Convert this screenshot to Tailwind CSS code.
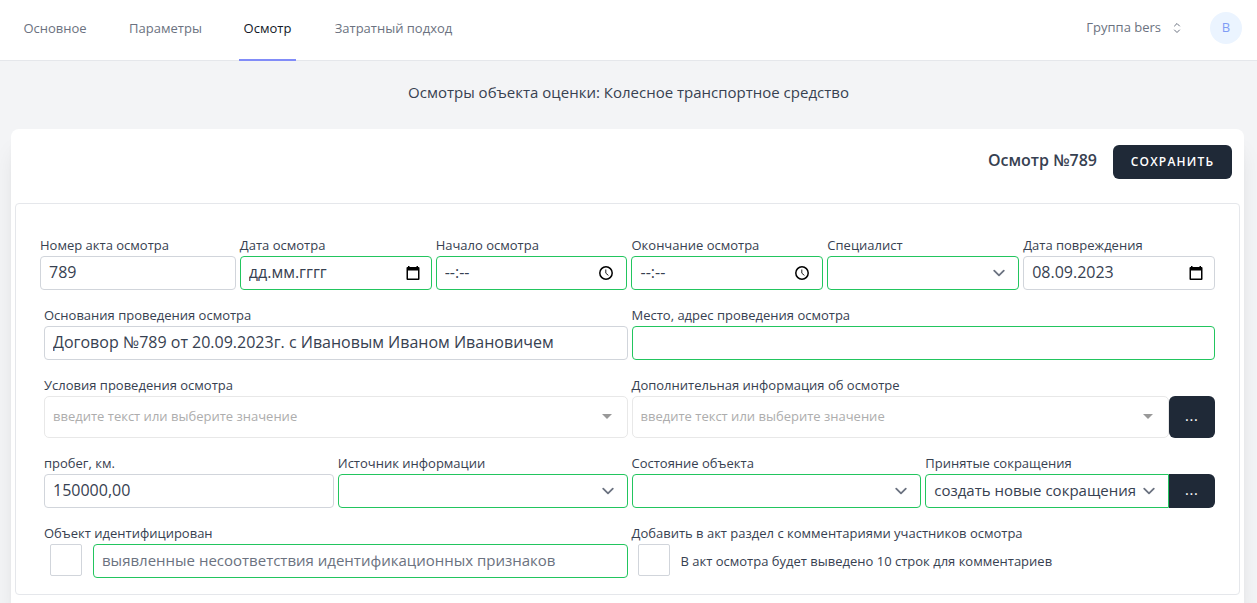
<!DOCTYPE html>
<html lang="ru">
<head>
<meta charset="utf-8">
<meta name="viewport" content="width=device-width, initial-scale=1">
<title>Осмотр №789</title>
<script src="https://cdn.jsdelivr.net/npm/@tailwindcss/browser@4"></script>
</head>
<body class="flex min-h-screen flex-col bg-[#f3f4f6] font-['Open_Sans','Noto_Sans',sans-serif] text-[#374151]">
  <svg class="hidden">
    <symbol id="calendar" viewBox="0 0 16 16"><path fill="#000" fill-rule="evenodd" d="M3 1h1.500v1h7V1H13v1h.500a1 1 0 0 1 1 1v11a1 1 0 0 1-1 1h-11a1 1 0 0 1-1-1V3a1 1 0 0 1 1-1H3zM3 5.500v8h10v-8z"/></symbol>
    <symbol id="clock" viewBox="0 0 16 16"><circle cx="8" cy="8" r="6.200" fill="none" stroke="#000" stroke-width="1.500"/><path d="M7.800 4.500v3.700l2.600 2.200" fill="none" stroke="#222" stroke-width="1"/></symbol>
    <symbol id="chevron" viewBox="0 0 20 20"><path stroke="#6b7280" fill="none" stroke-linecap="round" stroke-linejoin="round" stroke-width="1.500" d="M6 8l4 4 4-4"/></symbol>
    <symbol id="caret" viewBox="0 0 10 5"><path fill="#999" d="M0 0h10L5 5z"/></symbol>
  </svg>

  <header class="flex h-[61px] shrink-0 items-stretch justify-between border-b border-[#e5e7eb] bg-white pr-[15px] pl-[18px]">
    <nav class="-mb-px flex gap-8 text-[13px] whitespace-nowrap text-[#6b7280]">
      <a href="#" class="flex w-[74px] items-center justify-center border-b-2 border-transparent pb-0.5">Основное</a>
      <a href="#" class="flex w-[83px] items-center justify-center border-b-2 border-transparent pb-0.5">Параметры</a>
      <a href="#" class="flex w-[57px] items-center justify-center border-b-2 border-[#818cf8] pb-0.5 text-[#111827]" aria-current="page">Осмотр</a>
      <a href="#" class="flex w-[131px] items-center justify-center border-b-2 border-transparent pb-0.5">Затратный подход</a>
    </nav>
    <div class="flex items-center pb-1">
      <button type="button" class="flex items-center gap-2 text-[13px] text-[#6b7280]">Группа bers
        <svg class="mr-px size-4" viewBox="0 0 24 24" fill="none" stroke="#6b7280" stroke-width="1.500" stroke-linecap="round" stroke-linejoin="round"><path d="M8.250 15 12 18.750 15.750 15m-7.500-6L12 5.250 15.750 9"/></svg>
      </button>
      <button type="button" class="ml-6 flex size-8 items-center justify-center rounded-full bg-[#ebf4ff] text-[13px] text-[#7f9cf5]">B</button>
    </div>
  </header>

  <h1 class="pt-5 pb-[22px] text-center text-[15px] leading-[22px]">Осмотры объекта оценки: Колесное транспортное средство</h1>

  <main class="mt-1 mr-[13px] ml-[11px] flex-1 rounded-t-lg bg-white px-1 pb-2 shadow-xl">
    <div class="flex items-center justify-end gap-4 px-2 pt-4 pb-6">
      <h2 class="pb-1 text-base leading-5 font-semibold">Осмотр №789</h2>
      <button type="submit" form="inspection" class="flex h-[34px] w-[119px] items-center justify-center rounded-md bg-[#1f2937] text-xs font-semibold tracking-widest text-white uppercase">Сохранить</button>
    </div>

    <form id="inspection" class="flex flex-col gap-4 rounded border border-[#e5e7eb] px-6 pt-8 pb-4 text-[15px]">
      <div class="grid grid-cols-6 gap-1 pl-1">
        <div class="-ml-1">
          <label for="num" class="block pb-0.5 text-[13px] leading-[18px]">Номер акта осмотра</label>
          <input id="num" value="789" class="block h-[34px] w-full rounded border border-[#d1d5db] px-2 pb-0.5 text-base">
        </div>
        <div>
          <label for="date" class="block pb-0.5 text-[13px] leading-[18px]">Дата осмотра</label>
          <div class="flex h-[34px] items-center rounded border border-[#22c55e] pr-2.5 pl-2">
            <input id="date" placeholder="дд.мм.гггг" class="w-0 flex-1 pb-0.5 text-base placeholder:text-[#374151]">
            <button type="button" aria-label="Календарь"><svg class="size-4"><use href="#calendar"/></svg></button>
          </div>
        </div>
        <div>
          <label for="start" class="block pb-0.5 text-[13px] leading-[18px]">Начало осмотра</label>
          <div class="flex h-[34px] items-center rounded border border-[#22c55e] pr-3 pl-2">
            <input id="start" placeholder="--:--" class="w-0 flex-1 pb-0.5 text-base placeholder:text-[#374151]">
            <button type="button" aria-label="Время"><svg class="size-4"><use href="#clock"/></svg></button>
          </div>
        </div>
        <div>
          <label for="end" class="block pb-0.5 text-[13px] leading-[18px]">Окончание осмотра</label>
          <div class="flex h-[34px] items-center rounded border border-[#22c55e] pr-3 pl-2">
            <input id="end" placeholder="--:--" class="w-0 flex-1 pb-0.5 text-base placeholder:text-[#374151]">
            <button type="button" aria-label="Время"><svg class="size-4"><use href="#clock"/></svg></button>
          </div>
        </div>
        <div>
          <label for="spec" class="block pb-0.5 text-[13px] leading-[18px]">Специалист</label>
          <div class="relative">
            <select id="spec" class="block h-[34px] w-full appearance-none rounded border border-[#22c55e] px-2"><option></option></select>
            <svg class="pointer-events-none absolute top-[5px] right-2 size-6"><use href="#chevron"/></svg>
          </div>
        </div>
        <div>
          <label for="damage" class="block pb-0.5 text-[13px] leading-[18px]">Дата повреждения</label>
          <div class="flex h-[34px] items-center rounded border border-[#d1d5db] pr-2.5 pl-2">
            <input id="damage" value="08.09.2023" class="w-0 flex-1 pb-0.5 text-base">
            <button type="button" aria-label="Календарь"><svg class="size-4"><use href="#calendar"/></svg></button>
          </div>
        </div>
      </div>

      <div class="grid grid-cols-2 gap-1 pl-1">
        <div>
          <label for="basis" class="block pb-0.5 text-[13px] leading-[18px]">Основания проведения осмотра</label>
          <input id="basis" value="Договор №789 от 20.09.2023г. с Ивановым Иваном Ивановичем" class="block h-[34px] w-full rounded border border-[#d1d5db] px-2 pb-0.5 text-base">
        </div>
        <div>
          <label for="place" class="block pb-0.5 text-[13px] leading-[18px]">Место, адрес проведения осмотра</label>
          <input id="place" class="block h-[34px] w-full rounded border border-[#22c55e] px-2">
        </div>
      </div>

      <div class="grid grid-cols-2 gap-1 pl-1">
        <div>
          <label for="cond" class="block pb-0.5 text-[13px] leading-[18px]">Условия проведения осмотра</label>
          <div class="flex h-[42px] items-center rounded-[5px] border border-[#e8e8e8] pr-[15px] pl-2">
            <input id="cond" placeholder="введите текст или выберите значение" class="w-0 flex-1 text-[13px] placeholder:text-[#adadad]">
            <button type="button" aria-label="Открыть список" class="pb-0.5"><svg class="h-[5px] w-2.5"><use href="#caret"/></svg></button>
          </div>
        </div>
        <div>
          <label for="extra" class="block pb-0.5 text-[13px] leading-[18px]">Дополнительная информация об осмотре</label>
          <div class="flex">
            <div class="flex h-[42px] flex-1 items-center rounded-[5px] border border-[#e8e8e8] pr-[15px] pl-2">
              <input id="extra" placeholder="введите текст или выберите значение" class="w-0 flex-1 text-[13px] placeholder:text-[#adadad]">
              <button type="button" aria-label="Открыть список" class="pb-0.5"><svg class="h-[5px] w-2.5"><use href="#caret"/></svg></button>
            </div>
            <button type="button" class="w-[46px] rounded-md bg-[#1f2937] text-xs font-semibold tracking-widest text-white">...</button>
          </div>
        </div>
      </div>

      <div class="grid grid-cols-4 gap-1 pl-1">
        <div>
          <label for="mileage" class="block pb-0.5 text-[13px] leading-[18px]">пробег, км.</label>
          <input id="mileage" value="150000,00" class="block h-[34px] w-full rounded border border-[#d1d5db] px-2 pb-0.5 text-base">
        </div>
        <div>
          <label for="source" class="block pb-0.5 text-[13px] leading-[18px]">Источник информации</label>
          <div class="relative">
            <select id="source" class="block h-[34px] w-full appearance-none rounded border border-[#22c55e] px-2"><option></option></select>
            <svg class="pointer-events-none absolute top-[5px] right-2 size-6"><use href="#chevron"/></svg>
          </div>
        </div>
        <div>
          <label for="state" class="block pb-0.5 text-[13px] leading-[18px]">Состояние объекта</label>
          <div class="relative">
            <select id="state" class="block h-[34px] w-full appearance-none rounded border border-[#22c55e] px-2"><option></option></select>
            <svg class="pointer-events-none absolute top-[5px] right-2 size-6"><use href="#chevron"/></svg>
          </div>
        </div>
        <div>
          <label for="abbr" class="block pb-0.5 text-[13px] leading-[18px]">Принятые сокращения</label>
          <div class="flex">
            <div class="relative flex-1">
              <select id="abbr" class="block h-[34px] w-full appearance-none rounded-l border border-[#22c55e] pb-0.5 pl-2"><option>создать новые сокращения</option></select>
              <svg class="pointer-events-none absolute top-[5px] right-2 size-6"><use href="#chevron"/></svg>
            </div>
            <button type="button" class="w-[46px] rounded-r-md bg-[#1f2937] text-xs font-semibold tracking-widest text-white">...</button>
          </div>
        </div>
      </div>

      <div class="grid grid-cols-2 gap-1 pl-1">
        <div>
          <label for="ident" class="block pb-0.5 text-[13px] leading-[18px]">Объект идентифицирован</label>
          <div class="flex pl-1.5">
            <input id="ident" type="checkbox" class="mr-[11px] size-8 shrink-0 appearance-none rounded-xs border border-[#d1d5db]">
            <input aria-label="Выявленные несоответствия" placeholder="выявленные несоответствия идентификационных признаков" class="h-[34px] w-0 flex-1 rounded border border-[#22c55e] px-2 pb-0.5 placeholder:text-[#6b7280]">
          </div>
        </div>
        <div>
          <label for="comments" class="block pb-0.5 text-[13px] leading-[18px]">Добавить в акт раздел с комментариями участников осмотра</label>
          <div class="flex items-center gap-[11px] pl-1.5">
            <input id="comments" type="checkbox" class="size-8 shrink-0 appearance-none rounded-xs border border-[#d1d5db]">
            <span class="pt-0.5 text-[13px] leading-5">В акт осмотра будет выведено 10 строк для комментариев</span>
          </div>
        </div>
      </div>
    </form>
  </main>
</body>
</html>
